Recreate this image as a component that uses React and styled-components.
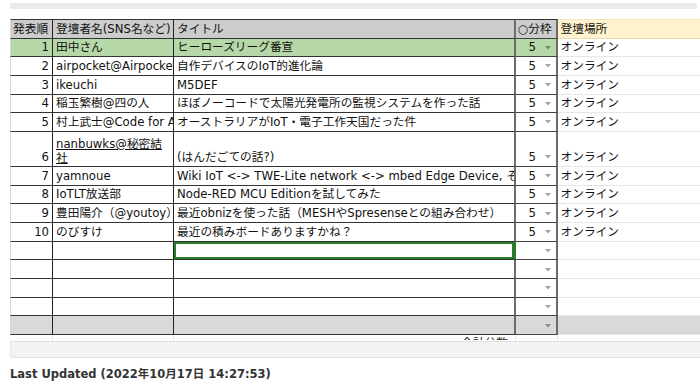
import React from 'react';
import styled, { createGlobalStyle } from 'styled-components';

const FONT = `"DejaVu Sans", "Noto Sans CJK JP", sans-serif`;

const TONES = {
  head: '#cccccc',
  hl: '#b6d7a8',
  gray: '#d9d9d9',
};

const talks = [
  { no: 1, name: '田中さん', title: 'ヒーローズリーグ番宣', min: 5, place: 'オンライン', tone: 'hl' },
  { no: 2, name: 'airpocket@Airpocket', title: '自作デバイスのIoT的進化論', min: 5, place: 'オンライン' },
  { no: 3, name: 'ikeuchi', title: 'M5DEF', min: 5, place: 'オンライン' },
  { no: 4, name: '稲玉繁樹@四の人', title: 'ほぼノーコードで太陽光発電所の監視システムを作った話', min: 5, place: 'オンライン' },
  { no: 5, name: '村上武士@Code for Aichi', title: 'オーストラリアがIoT・電子工作天国だった件', min: 5, place: 'オンライン' },
  { no: 6, name: ['nanbuwks@秘密結', '社'], link: true, title: '(はんだごての話?)', min: 5, place: 'オンライン' },
  { no: 7, name: 'yamnoue', title: 'Wiki IoT <-> TWE-Lite network <-> mbed Edge Device, それから', min: 5, place: 'オンライン' },
  { no: 8, name: 'IoTLT放送部', title: 'Node-RED MCU Editionを試してみた', min: 5, place: 'オンライン' },
  { no: 9, name: '豊田陽介（@youtoy）', title: '最近obnizを使った話（MESHやSpresenseとの組み合わせ）', min: 5, place: 'オンライン' },
  { no: 10, name: 'のびすけ', title: '最近の積みボードありますかね？', min: 5, place: 'オンライン' },
  { selected: true },
  {},
  {},
  {},
  { tone: 'gray' },
];

const GlobalStyle = createGlobalStyle`
  body {
    margin: 0;
    background: #ffffff;
    font-family: ${FONT};
    color: #111111;
  }
`;

const Page = styled.div`
  width: 690px;
  padding: 3px 0 0 10px;
`;

const TopBar = styled.div`
  width: 687px;
  height: 6px;
  background: #ebebeb;
`;

const Sheet = styled.div`
  display: grid;
  grid-template-columns: 43px 121px 342px 42px 142px;
  grid-template-rows: 19.5px repeat(5, 18.7px) 35px repeat(9, 18.7px) 5px;
  margin-top: 10px;
  font-size: 11.7px;
`;

const Cell = styled.div`
  box-sizing: border-box;
  display: flex;
  align-items: flex-end;
  min-width: 0;
  overflow: hidden;
  white-space: nowrap;
  padding: 0 3px 1px;
  line-height: 15px;
  border-bottom: 1px solid #333333;
  border-right: 1px solid #222222;
  border-top: ${({ $tone }) => ($tone === 'head' ? '1px solid #333333' : '0')};
  background: ${({ $tone }) => TONES[$tone] || '#ffffff'};
`;

const NoCell = styled(Cell)`
  justify-content: ${({ $tone }) => ($tone === 'head' ? 'flex-start' : 'flex-end')};
  padding-left: 2px;
  border-left: 1px solid #d8d8d8;
`;

const NameCell = styled(Cell)`
  padding-left: 3px;
`;

const TitleCell = styled(Cell)`
  border-right: 2px solid #6b6b6b;
  ${({ $selected }) =>
    $selected &&
    `
    border-right-color: #2a7b2a;
    box-shadow: inset 0 0 0 2px #2a7b2a;
  `}
`;

const MinCell = styled(Cell)`
  justify-content: ${({ $tone }) => ($tone === 'head' ? 'flex-start' : 'flex-end')};
  gap: 9px;
  padding: 0 5px 1px 2px;
  border-right: 2px solid #6b6b6b;
  border-bottom-color: #444444;
`;

const PlaceCell = styled(Cell)`
  padding-left: 2.5px;
  border-right: 0;
  border-top-color: #f3e6bd;
  border-bottom: 1px solid ${({ $tone }) => ($tone === 'head' ? '#eadcb0' : '#e6e6e6')};
  background: ${({ $tone }) =>
    $tone === 'head' ? '#fff2cc' : $tone === 'gray' ? '#d9d9d9' : '#ffffff'};
`;

const NameLink = styled.span`
  white-space: normal;
  text-decoration: underline;
  line-height: 14px;
`;

const CaretBox = styled.span`
  display: inline-flex;
  align-items: center;
  height: 15px;
`;

const StubCell = styled.div`
  box-sizing: border-box;
  display: flex;
  justify-content: flex-end;
  align-items: flex-start;
  overflow: hidden;
  padding: 1px 7px 0 0;
  line-height: 15px;
  color: #222222;
  border-right: 1px solid ${({ $last }) => ($last ? 'transparent' : '#e4e4e4')};
`;

const ScrollTrack = styled.div`
  box-sizing: border-box;
  height: 17px;
  margin-top: 1px;
  background: #f3f3f3;
  border-top: 1px solid #e0e0e0;
  border-left: 1px solid #e6e6e6;
  border-bottom: 1px solid #e4e4e4;
`;

const Updated = styled.div`
  margin-top: 9px;
  font-size: 11.5px;
  font-weight: bold;
  line-height: 15px;
  color: #333333;
`;

const Caret = () => (
  <CaretBox>
    <svg width="6" height="4" viewBox="0 0 6 4">
      <polygon points="0,0 6,0 3,3.5" fill="rgba(0,0,0,0.36)" />
    </svg>
  </CaretBox>
);

const TalkRow = ({ talk }) => {
  const { no, name, link, title, min, place, tone, selected } = talk;
  return (
    <>
      <NoCell $tone={tone}>{no}</NoCell>
      <NameCell $tone={tone}>
        {link ? (
          <NameLink>
            {name[0]}
            <br />
            {name[1]}
          </NameLink>
        ) : (
          name
        )}
      </NameCell>
      <TitleCell $tone={tone} $selected={selected}>
        {title}
      </TitleCell>
      <MinCell $tone={tone}>
        {min}
        <Caret />
      </MinCell>
      <PlaceCell $tone={tone}>{place}</PlaceCell>
    </>
  );
};

const App = () => (
  <>
    <GlobalStyle />
    <Page>
      <TopBar />
      <Sheet>
        <NoCell $tone="head">発表順</NoCell>
        <NameCell $tone="head">登壇者名(SNS名など)</NameCell>
        <TitleCell $tone="head">タイトル</TitleCell>
        <MinCell $tone="head">○分枠</MinCell>
        <PlaceCell $tone="head">登壇場所</PlaceCell>
        {talks.map((talk, i) => (
          <TalkRow key={i} talk={talk} />
        ))}
        <StubCell />
        <StubCell />
        <StubCell>合計分数</StubCell>
        <StubCell />
        <StubCell $last />
      </Sheet>
      <ScrollTrack />
      <Updated>Last Updated (2022年10月17日 14:27:53)</Updated>
    </Page>
  </>
);

export default App;
